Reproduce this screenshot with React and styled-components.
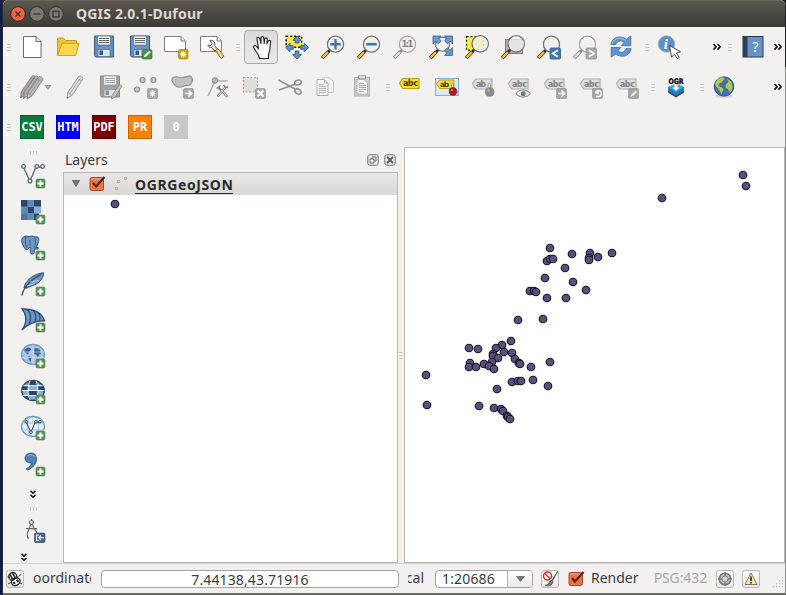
import React from 'react';
import styled, { createGlobalStyle } from 'styled-components';

const Global = createGlobalStyle`
  * { box-sizing: border-box; }
  body {
    margin: 0;
    overflow: hidden;
    font-family: "Noto Sans", "Open Sans", sans-serif;
    font-size: 14px;
    color: #3c3c3c;
  }
`;

const Desktop = styled.div`
  width: 786px;
  height: 595px;
  padding: 0 1px 2px 3px;
  background:
    linear-gradient(90deg, #101c44 0 2px, #2a2c33 2px 3px, transparent 3px),
    linear-gradient(#1f1e1c 0 67px, #8b8a87 67px 592px, #6b6b66 592px);
`;
const Window = styled.div`
  width: 782px;
  height: 593px;
  display: flex;
  flex-direction: column;
  border-radius: 5px 5px 0 0;
  background: #f2f1f0;
`;

const TitleBar = styled.header`
  height: 27px;
  flex: none;
  display: flex;
  align-items: center;
  gap: 3px;
  padding-left: 7px;
  border-top: 1px solid #68665a;
  border-radius: 5px 5px 0 0;
  background: linear-gradient(#59574e, #3d3b37);
`;
const TitleText = styled.h1`
  margin: 0 0 0 9px;
  font-size: 14px;
  line-height: 26px;
  font-weight: 700;
  letter-spacing: 0.2px;
  color: #dfdbd2;
`;
const WindowButton = styled.svg`
  width: 16px;
  height: 16px;
`;

const Toolbar = styled.div`
  height: 40px;
  flex: none;
  display: flex;
  align-items: center;
`;
const GripCell = styled.span`
  width: ${(p) => p.$w}px;
  padding-left: ${(p) => p.$pad}px;
  flex: none;
`;
const Grip = styled.i`
  display: block;
  width: 4px;
  height: 7px;
  background: repeating-linear-gradient(#c9c7c4 0 1px, #f7f6f5 1px 3px);
`;
const SideGrip = styled.i`
  display: block;
  width: 7px;
  height: 4px;
  background: repeating-linear-gradient(90deg, #c9c7c4 0 1px, #f7f6f5 1px 3px);
`;
const ToolButton = styled.button`
  width: 36px;
  height: 36px;
  flex: none;
  display: flex;
  align-items: center;
  justify-content: center;
  border: 0;
  padding: 0;
  background: none;
`;
const ActiveTool = styled(ToolButton)`
  width: 34px;
  height: 34px;
  margin: 0 1px;
  padding-left: 2px;
  border: 1px solid #aaa8a5;
  border-radius: 4px;
  background: linear-gradient(#dddbd9, #ebeae9);
`;
const Icon = styled.svg`
  width: 24px;
  height: 24px;
  flex: none;
  overflow: visible;
  font-family: "DejaVu Sans", sans-serif;
`;
const Spacer = styled.span`
  width: ${(p) => p.$w}px;
  flex: none;
`;
const FormatTile = styled.span`
  width: 24px;
  height: 24px;
  margin: 0 6px;
  flex: none;
  display: flex;
  align-items: center;
  justify-content: center;
  border: 1px solid rgba(0, 0, 0, ${(p) => (p.$flat ? 0 : 0.22)});
  background: ${(p) => p.$bg};
  color: #fff;
  font: 700 12px/22px "DejaVu Sans Mono", monospace;
`;

const Body = styled.main`
  height: 416px;
  flex: none;
  display: flex;
`;
const SideBar = styled.nav`
  width: 60px;
  flex: none;
  display: flex;
  flex-direction: column;
  align-items: center;
`;
const SideCell = styled.div`
  height: ${(p) => p.$h}px;
  width: 60px;
  padding-right: ${(p) => p.$shift || 0}px;
  flex: none;
  display: flex;
  align-items: center;
  justify-content: center;
`;
const Dock = styled.section`
  width: 335px;
  flex: none;
  display: flex;
  flex-direction: column;
`;
const DockTitle = styled.div`
  height: 25px;
  display: flex;
  align-items: center;
  padding: 0 2px;
  gap: 5px;
`;
const DockName = styled.span`
  flex: 1;
  font-size: 14px;
  letter-spacing: 0;
`;
const DockButton = styled.svg`
  width: 12px;
  height: 12px;
`;
const Tree = styled.div`
  flex: 1;
  border: 1px solid #bab8b4;
  background: #fff;
`;
const LayerRow = styled.div`
  height: 22px;
  display: flex;
  align-items: center;
  background: linear-gradient(#e9e8e6, #dad8d5);
`;
const TreeArrow = styled.svg`
  width: 8px;
  height: 7px;
  margin: 0 0 2px 8px;
`;
const LayerName = styled.span`
  height: 19px;
  margin-left: 8px;
  border-bottom: 1px solid #2a2a2a;
  font-size: 14px;
  line-height: 20px;
  font-weight: 700;
  letter-spacing: 0.6px;
  color: #2b2b2b;
`;
const SymbolRow = styled.div`
  height: 18px;
  padding: 4px 0 0 46px;
`;
const Symbol = styled.svg`
  display: block;
  width: 10px;
  height: 10px;
`;
const Splitter = styled.div`
  width: 6px;
  flex: none;
  display: flex;
  align-items: center;
  justify-content: center;
`;
const MapFrame = styled.section`
  width: 381px;
  height: 416px;
  border: 1px solid #bab8b4;
  background: #fff;
`;

const StatusBar = styled.footer`
  height: 30px;
  flex: none;
  display: flex;
  align-items: center;
  border-top: 1px solid #d5d3d0;
  padding-left: 3px;
`;
const Clip = styled.span`
  width: ${(p) => p.$w}px;
  height: 22px;
  margin-left: ${(p) => p.$ml}px;
  flex: none;
  display: flex;
  justify-content: ${(p) => p.$from || 'flex-start'};
  overflow: hidden;
  white-space: nowrap;
  line-height: 20px;
  letter-spacing: ${(p) => p.$track || 0};
  color: ${(p) => p.$color || '#3c3c3c'};
`;
const Field = styled.div`
  width: 298px;
  height: 18px;
  margin-left: 10px;
  flex: none;
  border: 1px solid #a5a29e;
  border-radius: 4px;
  background: #fff;
  text-align: center;
  line-height: 17px;
  letter-spacing: 0.12px;
`;
const Combo = styled.div`
  width: 98px;
  height: 18px;
  margin-left: 11px;
  flex: none;
  display: flex;
  overflow: hidden;
  border: 1px solid #a5a29e;
  border-radius: 4px;
  background: #fff;
`;
const ComboText = styled.span`
  width: 72px;
  padding-left: 6px;
  border-right: 1px solid #b5b2ae;
  line-height: 16px;
  letter-spacing: 0.15px;
`;
const ComboArrow = styled.span`
  flex: 1;
  display: flex;
  align-items: center;
  justify-content: center;
  background: linear-gradient(#fff, #ebeae8);
`;
const StatusButton = styled.span`
  width: 18px;
  height: 18px;
  margin-left: ${(p) => p.$ml}px;
  flex: none;
  display: flex;
  align-items: center;
  justify-content: center;
  border: 1px solid #b9b6b2;
  border-radius: 3px;
  background: linear-gradient(#fff, #e9e8e6);
`;
const SmallIcon = styled.svg`
  width: ${(p) => p.$w || 16}px;
  height: ${(p) => p.$h || 16}px;
  margin-left: ${(p) => p.$ml || 0}px;
  flex: none;
  overflow: visible;
`;

const BLUE = '#6d97c4';
const NAVY = '#2b4765';

const Badge = () => (
  <g>
    <rect x="15" y="15" width="9" height="9" rx="1.5" fill="#5a9155" stroke="#4c8048" strokeWidth=".6" />
    <path d="M19.5 16.5v6M16.5 19.5h6" stroke="#fff" strokeWidth="2" />
  </g>
);

const Lens = ({ cx = 14.5, cy = 9.2, r = 8, gray, children }) => (
  <g>
    <path d="M1.2 23l6.3-6.5" stroke={gray ? '#8d8d8d' : '#4a3a18'} strokeWidth="3.8" />
    <path d="M1.7 22.5l5.6-5.8" stroke={gray ? '#dcdcdc' : '#fdc02f'} strokeWidth="2.2" />
    <path d="M7 17l2.200-2.200" stroke={gray ? '#888' : '#2a2a2a'} strokeWidth="2.6" />
    <circle cx={cx} cy={cy} r={r} fill="#eeeeec" fillOpacity=".82" stroke={gray ? '#a2a2a2' : '#6c6c6c'} strokeWidth="1.3" />
    <circle cx={cx} cy={cy} r={r - 1.2} fill="none" stroke="#fff" strokeWidth=".8" opacity=".8" />
    {children}
  </g>
);

const Floppy = ({ gray }) => (
  <g>
    <path d="M2.5 1h19v21h-18l-1-1.5z" fill={gray ? '#a2a2a2' : '#6692c4'} stroke={gray ? '#858585' : '#34597f'} strokeWidth="1" />
    <path d="M5.5 1h13v9h-13z" fill="#f3f3f3" stroke={gray ? '#888' : '#3d5877'} strokeWidth=".6" />
    <path d="M7 3.5h10M7 5.5h10M7 7.5h10" stroke={gray ? '#9a9a9a' : '#555'} strokeWidth=".9" />
    <path d="M6 14.500h12v7H6z" fill="#dfe3e6" stroke={gray ? '#888' : '#3d5877'} strokeWidth=".6" />
    <path d="M7.500 15.500h3.500v4.500H7.500z" fill={gray ? '#8f8f8f' : '#2d598f'} />
  </g>
);

const GrayBadge = ({ children }) => (
  <g>
    <rect x="13.5" y="13.5" width="10" height="10" rx="1.3" fill="#a5a5a5" stroke="#8e8e8e" strokeWidth=".6" />
    {children}
  </g>
);

const Tag = ({ text = 'abc', yellow, children }) => (
  <Icon viewBox={yellow ? '1 .5 24 24' : '0 0 24 24'}>
    <path
      d="M1.500 8.700L4.700 4H21v10H4.700z"
      fill={yellow ? '#f5dc3e' : '#dfdfdf'}
      stroke={yellow ? '#c2a100' : '#b0b0b0'}
      strokeWidth="1.2"
      strokeLinejoin="round"
    />
    <text x="4.900" y="11.600" fontSize="8" fontWeight="700" textLength={text.length * 5} fill={yellow ? '#4b3d00' : '#7f7f7f'}>
      {text}
    </text>
    {children}
  </Icon>
);

const Chevrons = () => (
  <SmallIcon $w={8} $h={8} viewBox="0 0 8 8">
    <path d="M.5 1l2.6 2.8L.5 6.6M4.5 1l2.6 2.8-2.6 2.8" fill="none" stroke="#111" strokeWidth="1.6" />
  </SmallIcon>
);
const DownChevrons = () => (
  <SmallIcon $w={6} $h={8} viewBox="0 0 6 8">
    <path d="M.5.8L3 3.2 5.5.8M.5 4.8L3 7.2l2.5-2.4" fill="none" stroke="#111" strokeWidth="1.5" />
  </SmallIcon>
);

const pencil = (fill, line = '#999') => (
  <g>
    <path d="M4.200 17.500L15.200 1.500c1-1.300 4.800.9 4.200 2.500L8.700 20.200 3.500 23.500z" fill={fill} stroke={line} strokeWidth="1" strokeLinejoin="round" />
    <path d="M6.500 18.500L17 3M4.200 17.500l4.500 2.700M14 3.500l4.200 2.700" stroke={line} strokeWidth=".7" />
    <path d="M3.500 23.500l.3-2 1.500.8z" fill="#777" />
  </g>
);

const I = {
  page: (
    <Icon viewBox="0 0 24 24">
      <path d="M3.500 1.500h12.500l5 5v16h-17.500z" fill="#fff" stroke="#6c6c6c" />
      <path d="M16 1.500v5h5" fill="#e6e6e6" stroke="#6c6c6c" />
    </Icon>
  ),
  folder: (
    <Icon viewBox="0 0 24 24">
      <path d="M1.500 20V3.500l1-.5h5l2 2.500H20.500V9" fill="#e9c23c" stroke="#c79a1c" strokeLinejoin="round" />
      <path d="M1.500 20.500L6 8.500H23l-3.200 12z" fill="#fbd751" stroke="#d0a422" strokeLinejoin="round" />
    </Icon>
  ),
  save: <Icon viewBox="0 0 24 24"><Floppy /></Icon>,
  saveAs: (
    <Icon viewBox="0 0 24 24">
      <Floppy />
      <rect x="14" y="14.500" width="10" height="9.500" rx="1.500" fill="#4f8e51" stroke="#3e7640" strokeWidth=".7" />
      <path d="M16 22.200l.6-2.200 4.500-4.200 1.500 1.500-4.500 4.300z" fill="#fff" />
    </Icon>
  ),
  composer: (
    <Icon viewBox="0 0 24 24">
      <path d="M.5 1.500H17L21.500 6v10.500H.5z" fill="#fff" stroke="#808080" />
      <path d="M17 1.500V6h4.500" fill="#e6e6e6" stroke="#808080" />
      <rect x="14.500" y="14.500" width="9.500" height="9.500" rx="1.500" fill="#c79f10" stroke="#ad8800" strokeWidth=".7" />
      <path d="M19.200 16v6.500M16 19.200h6.500M17 17l4.500 4.500M21.500 17L17 21.500" stroke="#fff6cc" strokeWidth="1.200" />
    </Icon>
  ),
  manager: (
    <Icon viewBox="0 0 24 24">
      <path d="M.5 1.500H17L21.500 6v10.500H.5z" fill="#fff" stroke="#808080" />
      <path d="M17 1.500V6h4.500" fill="#e6e6e6" stroke="#808080" />
      <path d="M10 5.500c1.800-.6 4 .3 4.600 2 .4 1.100.3 2-.1 2.900l3.500 4.300-2.200 2.200-4-4.400c-1.800.3-3.600-.7-3.900-2.500l3 .5 1-2z" fill="#e4e4e4" stroke="#444" strokeWidth=".9" />
      <path d="M15.500 15.500l2.500-2 6 7.700-2.800 2.500z" fill="#edd57e" stroke="#73591b" strokeWidth=".9" />
    </Icon>
  ),
  hand: (
    <Icon viewBox="0 0 24 24">
      <path
        d="M8.200 19.500C6.500 17.500 5 15 3.700 12.500c-.7-1.600 1.600-2.600 2.900-1l2 2.400L7 4.200c-.4-2 2.100-2.600 2.700-.6L11 8.500V2.800c0-1.800 2.500-1.800 2.700 0l.5 5.700.6-4.500c.3-1.700 2.500-1.400 2.400.3L16.900 9l1.400-3c.8-1.300 2.700-.5 2.300 1l-.9 8.500c-.2 1.800-1 2.500-1.200 4v4H9.500z"
        fill="#fff" stroke="#222" strokeWidth="1.100" strokeLinejoin="round"
      />
    </Icon>
  ),
  panSel: (
    <Icon viewBox="0 0 24 24">
      <rect x="1.200" y="1.200" width="15.500" height="11" fill="#fbe73c" stroke="#111" strokeWidth="1.600" strokeDasharray="2 2" />
      <path
        d="M12 1l4 4.300h-2.200V8h-3.600V5.300H8zM12 24l-4.300-4.500h2.500V16h3.600v3.500h2.500zM.7 12.500L5 8.200v2.500h3.200v3.600H5v2.500zM23.500 12.500l-4.300-4.300v2.500h-3.500v3.600h3.500v2.500z"
        fill="#5f92c9" stroke="#2c5686" strokeWidth=".9"
      />
    </Icon>
  ),
  zoomIn: (
    <Icon viewBox="0 0 24 24"><Lens><path d="M14.500 4v10.500M9.200 9.200h10.600" stroke="#3f74ad" strokeWidth="2.400" /></Lens></Icon>
  ),
  zoomOut: (
    <Icon viewBox="0 0 24 24"><Lens><path d="M9.200 9.200h10.600" stroke="#3f74ad" strokeWidth="2.600" /></Lens></Icon>
  ),
  zoomOne: (
    <Icon viewBox="0 0 24 24">
      <Lens gray><text x="14.500" y="12.200" textAnchor="middle" fontSize="8.500" fontWeight="700" textLength="12" fill="#858585">1:1</text></Lens>
    </Icon>
  ),
  zoomFull: (
    <Icon viewBox="0 0 24 24">
      <Lens cx={13.500} r={7} />
      <path
        d="M4 1h8L9.600 3.300 12 5.800 9 8.800 6.400 6.200 4 9zM23.500 1h-8l2.400 2.300-2.400 2.500 3 3 2.600-2.600L23.500 9zM23.500 20.500h-8l2.400-2.300-2.400-2.500 3-3 2.600 2.600 2.400-2.800z"
        fill="#6a98c9" stroke="#365f8c" strokeWidth=".8"
      />
    </Icon>
  ),
  zoomSel: (
    <Icon viewBox="0 0 24 24">
      <rect x="1.500" y="1.700" width="17" height="13.500" fill="#ffea3c" stroke="#222" strokeWidth="1.300" strokeDasharray="2 2" />
      <Lens cx={15.200} cy={8.800} r={8.200} />
    </Icon>
  ),
  zoomLayer: (
    <Icon viewBox="0 0 24 24">
      <rect x="4.500" y="4.500" width="17" height="14" fill="#b9aebd" stroke="#81718a" />
      <Lens cx={15.200} cy={8.800} r={8.200} />
    </Icon>
  ),
  zoomLast: (
    <Icon viewBox="0 0 24 24">
      <Lens />
      <rect x="13" y="13" width="10.500" height="11" rx="1" fill="#4478ae" stroke="#2e5f92" strokeWidth=".8" />
      <path d="M21 15.200l-5.300 3.300 5.300 3.300" fill="none" stroke="#fff" strokeWidth="1.700" />
    </Icon>
  ),
  zoomNext: (
    <Icon viewBox="0 0 24 24">
      <Lens gray />
      <rect x="13" y="13" width="10.500" height="11" rx="1" fill="#a9a9a9" stroke="#929292" strokeWidth=".8" />
      <path d="M15.800 15.200l5.300 3.300-5.300 3.300" fill="none" stroke="#fff" strokeWidth="1.700" />
    </Icon>
  ),
  refresh: (
    <Icon viewBox="0 0 24 24">
      <g fill="#5c95d2" stroke="#386fae" strokeWidth=".8" strokeLinejoin="round">
        <path d="M1.800 9.500C3.500 1.200 12 .2 17.300 4.200L21.800 1v9.700h-9.600l3-3.500C11.500 4.800 7.800 6 6.800 9.700z" />
        <path d="M22.200 13.700c-1.700 8.300-10.200 9.300-15.500 5.300l-4.500 3.200v-9.700h9.600l-3 3.500c3.700 2.400 7.400 1.200 8.400-2.500z" />
      </g>
      <path d="M3 8.500C5 2.500 12 2 17 5.500" fill="none" stroke="#a7c9ea" strokeWidth=".9" />
    </Icon>
  ),
  identify: (
    <Icon viewBox="0 0 24 24">
      <circle cx="9.500" cy="9" r="8.300" fill="#5f8fc4" stroke="#9fb9d6" strokeWidth=".8" />
      <text x="6.800" y="14" fontSize="15" fontStyle="italic" fontWeight="700" fill="#fff" fontFamily="Liberation Serif">i</text>
      <path d="M12.500 10.500l11 6.300-4.200 1.200 3 4.300-1.800 1.300-3.200-4.400-2.800 3z" fill="#fff" stroke="#333" strokeWidth=".9" />
    </Icon>
  ),
  help: (
    <Icon viewBox="0 0 24 24">
      <rect x="2" y="1.500" width="20" height="20.500" fill="#6894c5" stroke="#26394c" />
      <rect x="2" y="1.500" width="4.500" height="20.500" fill="#2d4053" />
      <text x="14.500" y="16.500" fontSize="14" textAnchor="middle" fill="#fff" fontFamily="Noto Sans">?</text>
    </Icon>
  ),
  pencils: (
    <Icon viewBox="0 0 24 24">
      <g transform="translate(-3 -.5)">{pencil('#aaa', '#868686')}</g>
      <g transform="translate(0 0)">{pencil('#b4b4b4', '#868686')}</g>
      <g transform="translate(3.500 .5)">{pencil('#bcbcbc', '#868686')}</g>
    </Icon>
  ),
  pencil: <Icon viewBox="-1.500 0 24 24">{pencil('#dedede')}</Icon>,
  saveEdit: (
    <Icon viewBox="0 0 24 24">
      <Floppy gray />
      <path d="M14 20.500l7.500-11 2.500 1.500-7.500 11.500-3 1.500z" fill="#c5c5c5" stroke="#858585" strokeWidth=".8" />
    </Icon>
  ),
  addPoint: (
    <Icon viewBox="0 0 24 24">
      <g fill="#c4c4c4" stroke="#8f8f8f" strokeWidth="1.100">
        <circle cx="8.500" cy="5" r="2.500" /><circle cx="19.500" cy="5" r="2.500" /><circle cx="3" cy="14.500" r="2.500" />
      </g>
      <GrayBadge><path d="M18.500 15v7M15 18.500h7M16 16l5 5M21 16l-5 5" stroke="#fff" strokeWidth="1.100" /></GrayBadge>
    </Icon>
  ),
  moveFeature: (
    <Icon viewBox="0 0 24 24">
      <path d="M3 2.500c3-2 6 .2 9 .2s7-3.200 9.500-.7c2.500 3-.5 9-3.500 8.500-4-.7-5 2-8.500 1.800C5.500 12-.5 5.500 3 2.500z" fill="#c2c2c2" stroke="#929292" strokeWidth="1.100" />
      <GrayBadge><path d="M15 18.500h6M18.500 15.500l3 3-3 3" fill="none" stroke="#fff" strokeWidth="1.700" /></GrayBadge>
    </Icon>
  ),
  node: (
    <Icon viewBox="0 0 24 24">
      <path d="M2 21L9 6l12.500-.2" fill="none" stroke="#9b9b9b" strokeWidth="1.200" />
      <circle cx="9" cy="5.500" r="2.700" fill="#b9b9b9" stroke="#858585" />
      <path d="M11.500 21.500l8-9M12.500 12.500l9 9.500" stroke="#838383" strokeWidth="2.400" />
      <path d="M12 21l7-8M15 15l6 6.500" stroke="#ddd" strokeWidth="1" />
      <path d="M10.500 13.500l4-3M17.500 10l2.500 2.500 2-.5" fill="none" stroke="#838383" strokeWidth="1.400" />
    </Icon>
  ),
  deleteSel: (
    <Icon viewBox="0 0 24 24">
      <rect x="1.500" y="2.500" width="14" height="14.500" fill="#dedede" stroke="#a5a5a5" strokeWidth="1.200" strokeDasharray="2 1.500" />
      <GrayBadge><path d="M15.500 15.500l6 6M21.500 15.500l-6 6" stroke="#fff" strokeWidth="2" /></GrayBadge>
    </Icon>
  ),
  cut: (
    <Icon viewBox="0 0 24 24">
      <path d="M.5 5l16.500 9M1 15l17-6" stroke="#929292" strokeWidth="1.800" />
      <ellipse cx="20" cy="7.500" rx="3.300" ry="2.300" fill="none" stroke="#8f8f8f" strokeWidth="1.600" transform="rotate(-20 20 7.500)" />
      <ellipse cx="20" cy="16.500" rx="3.300" ry="2.300" fill="none" stroke="#8f8f8f" strokeWidth="1.600" transform="rotate(35 20 16.500)" />
    </Icon>
  ),
  copy: (
    <Icon viewBox="0 0 24 24">
      <path d="M8.500 2.500h7l4 4v11h-11z" fill="#f2f2f2" stroke="#c9c9c9" />
      <path d="M3 4.500h7.500l3.500 3.500v12.500H3z" fill="#f6f6f6" stroke="#adadad" />
      <path d="M5 9.500h5M5 11.500h7M5 13.500h7M5 15.500h7M5 17.500h7" stroke="#b5b5b5" />
      <path d="M10.500 4.500v3.500H14" fill="none" stroke="#adadad" />
    </Icon>
  ),
  paste: (
    <Icon viewBox="0 0 24 24">
      <rect x="4.500" y="2.500" width="15" height="18.500" fill="#cfcfcf" stroke="#b0b0b0" />
      <path d="M7 4.500h7l3.500 3.500v11H7z" fill="#f5f5f5" stroke="#aaa" strokeWidth=".8" />
      <rect x="8.500" y=".8" width="7" height="3" fill="#e9e9e9" stroke="#9b9b9b" />
      <path d="M9 8.500h5M9 10.500h7M9 12.500h7M9 14.500h7M9 16.500h5" stroke="#a2a2a2" strokeWidth=".9" />
    </Icon>
  ),
  ogr: (
    <Icon viewBox="0 0 24 24">
      <path d="M4 13.500l8-3 8 3v4l-8 5-8-5z" fill="#30424d" />
      <path d="M4 12l8-3 8 3v3.500l-8 5.500-8-5.500z" fill="#2080bd" />
      <path d="M4 12l8-3 8 3-8 5z" fill="#35a3e0" />
      <path d="M10.500 9h3v3.500h2.200L12 16l-3.700-3.500h2.200z" fill="#fff" />
      <text x="4.500" y="9" fontSize="7.500" fontWeight="700" textLength="15" lengthAdjust="spacingAndGlyphs" fill="#111" stroke="#111" strokeWidth=".4">OGR</text>
    </Icon>
  ),
  globe: (
    <Icon viewBox="0 0 24 24">
      <ellipse cx="12" cy="21" rx="9" ry="2" fill="#d5d4d2" />
      <circle cx="12" cy="11.500" r="9.700" fill="#3d70b4" stroke="#28518d" />
      <path d="M5 5c2.500-3 6-3.500 8-2l-2 2.500-1.500 2.500L7.500 8 6.500 11l3.500 1.500 1.500 2-2 4.500-2.500-4-3.500-4.500C3 8.400 3.500 7 5 5zM15 4l4 2.500 1.700 5-1.200 4.500-2 1-1.500-3-2.500-1.500.5-3.500 2.500-1.500z" fill="#b4c940" />
    </Icon>
  ),
};

const Vec = ({ s = '#48698a' }) => (
  <g fill="#fff" stroke={s} strokeWidth="1.300">
    <path d="M2.500 3.500L9 17l6-14h6" fill="none" />
    <circle cx="2.500" cy="2.500" r="1.800" /><circle cx="9" cy="17" r="1.900" /><circle cx="15.800" cy="2.500" r="1.800" /><circle cx="21.500" cy="2.500" r="1.800" />
  </g>
);

const sideIcons = [
  <g><Vec /></g>,
  <g>
    <path d="M6.700 0H13v6.700H6.700zM0 6.700h6.700v6.600H0zM6.700 13.300H13V20H6.700z" fill="#5f8abd" />
    <path d="M0 0h6.700v6.700H0zM13 0h7v6.700h-7zM6.700 6.700H13v6.600H6.700zM0 13.300h6.700V20H0zM13 13.300h5V20h-5z" fill={NAVY} />
    <path d="M13 6.700h7v6.600h-7zM0 13.300h6.700V20H0z" fill="#86b0df" />
    <path d="M0 13.300h6.700V20H0z" fill="#4c78a8" />
  </g>,
  <g fill={BLUE} stroke="#2d5075" strokeWidth="1">
    <path d="M2.500 1c2-1.500 4-.8 5.500-.3 2-.9 4.500-.8 6 .3 3-.9 4.500 1 3.500 4.500-.5 2.500-1.500 4.500-2.500 6h2V13h-3.700v3.500c0 2-3.800 2-4 0V11c-2 1.500-3 3.500-4.500 2.500C2 11-1.500 3 2.500 1z" />
    <path d="M5 1c-1 4-.5 8 1 11M9 4v6M13.500 1.500c1.500 3 1 6.500 0 10" fill="none" strokeWidth=".8" />
  </g>,
  <g>
    <path d="M3 16C4 9 12 2 22.500.7c.5 4-2.500 9-8.500 12-3 1.500-6 1.700-8 3.300z" fill={BLUE} stroke={NAVY} strokeWidth="1" />
    <path d="M.8 23.500C3 14 10 7.500 20 2.500" fill="none" stroke={NAVY} strokeWidth="1.200" />
    <path d="M6 14l8-2.500M9 10l9-1.500" stroke="#b7d0ea" strokeWidth="1" />
  </g>,
  <g fill={BLUE} stroke={NAVY} strokeWidth="1.200">
    <path d="M1 .8c9 0 19.500 2 22.500 12C15 12.500 8 15 .8 22 6 15.500 6 7 1 .8z" />
    <path d="M6.500 1.500c3.500 4 4 9 1.500 14M12 2c3 4 3.500 8 2 11M17 4.500c2 2.500 2.500 5.500 1.500 8" fill="none" />
  </g>,
  <g>
    <ellipse cx="12" cy="10.500" rx="11.500" ry="10" fill="#a9c5e5" stroke={BLUE} strokeWidth="1.300" />
    <path d="M3 6l4-2.500 3.500 1.500-2.500 3-1 2.500-3-2zM7.500 12l3 1.500-1 4.500-2-2.500zM13.500 4l3.500.5 2 1.500 1 4-2 .5-1 3-2-3-2-1z" fill="#3c638e" />
    <path d="M1 8h22M1 13.500h22M12 .5v20" stroke="#d1e0f1" strokeWidth=".7" />
  </g>,
  <g>
    <ellipse cx="12" cy="10.500" rx="11.300" ry="10" fill={NAVY} stroke={NAVY} strokeWidth="1.300" />
    <path d="M2.500 5.700L7 2.200 6.500 5.700zM17 5.700l-.5-3.500 5 3.500zM7 5.700h10V10H7zM1.500 10.500h5.500v5H2.500zM17 10.500h5.500l-1 5H17zM8 15.500h8l-1.500 4h-5z" fill="#86b0df" />
    <path d="M2.500 5.700h19M.8 10.500h22.400M2.500 15.500h19" stroke="#fff" strokeWidth="1" />
    <path d="M9 .8C6.500 6 6.500 14 9 20M15 .8c2.500 5.500 2.500 13.500 0 19" fill="none" stroke="#fff" strokeWidth="1" />
  </g>,
  <g>
    <ellipse cx="12" cy="10.500" rx="11.500" ry="10" fill="#e3edf7" stroke={BLUE} strokeWidth="1.300" />
    <path d="M1 7h22M1 14h22M9 .8c-3 5.500-3 14 0 19M15 .8c3 5.500 3 14 0 19" fill="none" stroke="#9dbfe3" strokeWidth="1" />
    <g transform="translate(3.500 4) scale(.72)"><Vec s="#1f2f3e" /></g>
  </g>,
  <g>
    <path d="M8 1.500c5-2 9 3 7 8.500-1.300 4-5 7-9 8l-.5-1.500c2.500-1 5-3.500 5-5.500C6.500 11 4 9 4 6c0-2 1.500-4 4-4.500z" fill="#527fb4" stroke="#34597f" strokeWidth=".9" />
    <path d="M7 4c2-2 5-1.500 6 .5" fill="none" stroke="#a8c5e5" strokeWidth="1" />
  </g>,
];

const Check = ({ ml }) => (
  <SmallIcon $ml={ml} viewBox="0 0 16 16">
    <rect x="1" y="1.500" width="13.500" height="13" rx="2" fill="#ef7444" stroke="#a9492a" />
    <path d="M2.500 3h10.500" stroke="#ffa680" />
    <path d="M4 7l3 3.500L15.500 1" fill="none" stroke="#4a2c22" strokeWidth="2.200" />
  </SmallIcon>
);

const points = [
  [743, 175], [746, 186], [662, 198], [550, 248], [572, 254], [590, 253], [612, 253], [598, 257], [589, 258],
  [589, 260], [547, 261], [550, 259], [553, 259], [565, 268], [545, 278], [573, 282], [586, 290], [530, 291],
  [534, 291], [536, 292], [547, 298], [566, 298], [518, 320], [543, 319], [469, 348], [478, 349], [511, 341],
  [502, 345], [496, 348], [504, 352], [512, 353], [493, 354], [493, 356], [498, 358], [492, 362], [515, 359],
  [519, 363], [520, 364], [470, 363], [469, 367], [476, 367], [484, 364], [489, 366], [494, 369], [531, 367],
  [550, 362], [512, 382], [518, 381], [521, 381], [533, 380], [548, 386], [497, 389], [479, 406], [494, 408],
  [501, 409], [503, 411], [507, 416], [508, 417], [510, 419], [426, 375], [427, 405],
];

const T = ({ icon }) => <ToolButton>{I[icon]}</ToolButton>;
const G = ({ w = 12, pad = 5 }) => <GripCell $w={w} $pad={pad}><Grip /></GripCell>;

export default function App() {
  return (
    <Desktop>
      <Global />
      <Window>
        <TitleBar>
          <WindowButton viewBox="0 0 16 16">
            <circle cx="8" cy="8" r="7.300" fill="#ee6440" stroke="#2f2c28" />
            <path d="M5.500 5.500l5 5M10.500 5.500l-5 5" stroke="#47261b" strokeWidth="1.300" />
          </WindowButton>
          <WindowButton viewBox="0 0 16 16">
            <circle cx="8" cy="8" r="7.300" fill="#7b7971" stroke="#34322e" />
            <path d="M4.500 8h7" stroke="#34322e" strokeWidth="1.300" />
          </WindowButton>
          <WindowButton viewBox="0 0 16 16">
            <circle cx="8" cy="8" r="7.300" fill="#7b7971" stroke="#34322e" />
            <rect x="5" y="5.200" width="6" height="5.600" fill="none" stroke="#34322e" strokeWidth="1.200" />
          </WindowButton>
          <TitleText>QGIS 2.0.1-Dufour</TitleText>
        </TitleBar>

        <Toolbar>
          <G w={11} pad={4} />
          {['page', 'folder', 'save', 'saveAs', 'composer', 'manager'].map((n) => <T key={n} icon={n} />)}
          <G w={13} pad={6} />
          <ActiveTool>{I.hand}</ActiveTool>
          {['panSel', 'zoomIn', 'zoomOut', 'zoomOne', 'zoomFull', 'zoomSel', 'zoomLayer', 'zoomLast', 'zoomNext', 'refresh'].map((n) => (
            <T key={n} icon={n} />
          ))}
          <G w={12} pad={6} />
          <T icon="identify" />
          <Spacer $w={26} />
          <Chevrons />
          <G w={14} pad={7} />
          <T icon="help" />
          <Spacer $w={3} />
          <Chevrons />
        </Toolbar>

        <Toolbar>
          <G w={11} pad={4} />
          <ToolButton>{I.pencils}</ToolButton>
          <SmallIcon $w={6} $h={5} $ml={-5} viewBox="0 0 6 5"><path d="M0 .5h6L3 4.500z" fill="#aaa" stroke="#8c8c8c" strokeWidth=".7" /></SmallIcon>
          <Spacer $w={5} />
          {['pencil', 'saveEdit', 'addPoint', 'moveFeature', 'node', 'deleteSel', 'cut', 'copy', 'paste'].map((n) => <T key={n} icon={n} />)}
          <G w={13} pad={6} />
          <ToolButton><Tag yellow /></ToolButton>
          <ToolButton>
            <Icon viewBox="0 0 24 24">
              <rect x=".5" y="3.500" width="23" height="17" fill="#dce8f7" stroke="#82ade4" />
              <path d="M1.500 8.700L4.700 5H19v8.500H4.700z" fill="#f5dc3e" stroke="#c2a100" />
              <text x="5" y="11.800" fontSize="7.500" fontWeight="700" textLength="9" fill="#4b3d00">ab</text>
              <path d="M16.500 15V9.500c0-1.500 2-1.500 2 0V15" fill="#ddd" stroke="#888" strokeWidth=".8" />
              <circle cx="18" cy="16.500" r="3.900" fill="#b01c1c" stroke="#7f1515" strokeWidth=".6" />
              <circle cx="17" cy="15.300" r="1" fill="#e58b8b" />
            </Icon>
          </ToolButton>
          <ToolButton>
            <Tag text="ab">
              <path d="M17 16V9.500c0-1.500 2.500-1.500 2.500 0V16" fill="#e6e6e6" stroke="#999" strokeWidth=".9" />
              <circle cx="18.700" cy="17" r="4.800" fill="#8b8b8b" />
              <circle cx="17.500" cy="15.500" r="1.200" fill="#b5b5b5" />
            </Tag>
          </ToolButton>
          <ToolButton>
            <Tag>
              <path d="M9 18.700c3-5 11-5 14.500 0-4 4.500-11 4.500-14.500 0z" fill="#eee" stroke="#929292" strokeWidth="1.100" />
              <circle cx="16.200" cy="18.700" r="2.500" fill="#777" />
            </Tag>
          </ToolButton>
          <ToolButton><Tag><GrayBadge><path d="M15 18.500h6M18.500 15.500l3 3-3 3" fill="none" stroke="#fff" strokeWidth="1.600" /></GrayBadge></Tag></ToolButton>
          <ToolButton><Tag><GrayBadge><path d="M17 21.500h2.500a3 3 0 1 0-3-4l2.500 1V16" fill="none" stroke="#fff" strokeWidth="1.400" /></GrayBadge></Tag></ToolButton>
          <ToolButton><Tag><GrayBadge><path d="M15.500 22l1-2.500 4-4 1.500 1.500-4 4z" fill="#eee" /></GrayBadge></Tag></ToolButton>
          <G w={13} pad={6} />
          <T icon="ogr" />
          <G w={12} pad={6} />
          <T icon="globe" />
          <Spacer $w={32} />
          <Chevrons />
        </Toolbar>

        <Toolbar>
          <G w={11} pad={4} />
          <FormatTile $bg="#077b3d">CSV</FormatTile>
          <FormatTile $bg="#0000ff">HTM</FormatTile>
          <FormatTile $bg="#7d0000">PDF</FormatTile>
          <FormatTile $bg="#ff7f00">PR</FormatTile>
          <FormatTile $bg="#c7c7c7" $flat>0</FormatTile>
        </Toolbar>

        <Body>
          <SideBar>
            <SideCell $h={11}><SideGrip /></SideCell>
            {sideIcons.map((shape, i) => (
              <SideCell key={i} $h={36}><Icon viewBox="0 0 24 24">{shape}<Badge /></Icon></SideCell>
            ))}
            <SideCell $h={24}><DownChevrons /></SideCell>
            <SideCell $h={5}><SideGrip /></SideCell>
            <SideCell $h={40}>
              <Icon viewBox="0 0 24 24">
                <g fill="none" stroke="#666" strokeWidth="1.200">
                  <circle cx="10.500" cy="3.500" r="2" />
                  <path d="M10.500 0v1.500M9.500 5.500C8.500 12 4 14 7.500 20M11.500 5.500c1 5 4 6 4.500 9M5 9.700h11" />
                </g>
                <rect x="13.500" y="14" width="10.500" height="9.500" rx="1.500" fill="#436987" stroke="#2b4b66" strokeWidth=".7" />
                <path d="M18 16h-2.500v5.500H18M23 18.700h-5M20 16.500l-2.300 2.200L20 21" fill="none" stroke="#fff" strokeWidth="1.100" />
              </Icon>
            </SideCell>
            <SideCell $h={11} $shift={19}><DownChevrons /></SideCell>
          </SideBar>

          <Dock>
            <DockTitle>
              <DockName>Layers</DockName>
              <DockButton viewBox="0 0 12 12">
                <g fill="none" stroke="#6d6a66"><rect x=".8" y=".8" width="10.400" height="10.400" rx="2" /><path d="M5 5V3h4v4H7M3 5h4v4H3z" /></g>
              </DockButton>
              <DockButton viewBox="0 0 12 12">
                <rect x=".8" y=".8" width="10.400" height="10.400" rx="2" fill="none" stroke="#6d6a66" />
                <path d="M3 3l6 6M9 3L3 9" stroke="#5d5a57" strokeWidth="2" />
              </DockButton>
            </DockTitle>
            <Tree>
              <LayerRow>
                <TreeArrow viewBox="0 0 8 7"><path d="M.5.500h7L4 6.500z" fill="#777" stroke="#4c4c4c" strokeWidth=".7" /></TreeArrow>
                <Check ml={9} />
                <SmallIcon $w={12} $h={14} $ml={10} viewBox="0 0 12 14">
                  <g fill="#f4e1d9" stroke="#bf7d68" strokeWidth=".8"><circle cx="1.500" cy="11.500" r="1.200" /><circle cx="3.500" cy="4.500" r="1.200" /><circle cx="10.500" cy="1.500" r="1.200" /></g>
                </SmallIcon>
                <LayerName>OGRGeoJSON</LayerName>
              </LayerRow>
              <SymbolRow>
                <Symbol viewBox="0 0 10 10"><circle cx="5" cy="5" r="3.800" fill="#5b4e80" stroke="#15121c" strokeWidth="1.100" /></Symbol>
              </SymbolRow>
            </Tree>
          </Dock>
          <Splitter><Grip /></Splitter>
          <MapFrame>
            <svg width="379" height="414" viewBox="405 148 379 414">
              {points.map(([x, y], i) => (
                <circle key={i} cx={x} cy={y} r="3.800" fill="#5b4e80" stroke="#15121c" strokeWidth="1.100" />
              ))}
            </svg>
          </MapFrame>
        </Body>

        <StatusBar>
          <StatusButton $ml={0}>
            <SmallIcon viewBox="0 0 16 16">
              <g transform="rotate(-30 7.500 8.500)">
                <ellipse cx="7.500" cy="5" rx="4" ry="4" fill="#fff" stroke="#222" strokeWidth="1.300" />
                <ellipse cx="7.500" cy="11" rx="4.500" ry="3.700" fill="#fff" stroke="#222" strokeWidth="1.300" />
                <path d="M6 1.500v6M9 1.500v6M4 8h7.500" stroke="#222" strokeWidth="1.600" />
                <path d="M5.500 10v2.500M9.500 10v2.500" stroke="#222" strokeWidth="2" />
              </g>
              <path d="M.5 6l2.500.5M14.500 3l-3 2.500M1 13l2.500-1.500M15 13l-2.500-1.500" stroke="#222" />
            </SmallIcon>
          </StatusButton>
          <Clip $w={57} $ml={10} $from="center">Coordinate:</Clip>
          <Field>7.44138,43.71916</Field>
          <Clip $w={16} $ml={9} $from="flex-end">Scal</Clip>
          <Combo>
            <ComboText>1:20686</ComboText>
            <ComboArrow><SmallIcon $w={9} $h={6} viewBox="0 0 9 6"><path d="M.5.500h8l-4 5z" fill="#777" stroke="#555" strokeWidth=".6" /></SmallIcon></ComboArrow>
          </Combo>
          <StatusButton $ml={8}>
            <SmallIcon viewBox="0 0 16 16">
              <path d="M15.500.5L10 9l-2 1c-1 2-2 4-5 4.500 4 1 7 0 8-3.500l-.5-1z" fill="#777" stroke="#555" strokeWidth=".8" />
              <circle cx="5.500" cy="5" r="4" fill="#fff" stroke="#d8292f" strokeWidth="1.500" />
              <path d="M2.800 2.500L8.200 7.800" stroke="#d8292f" strokeWidth="1.400" />
            </SmallIcon>
          </StatusButton>
          <Check ml={9} />
          <Clip $w={50} $ml={7}>Render</Clip>
          <Clip $w={53} $ml={13} $from="center" $color="#a8a6a3" $track="-0.1px">EPSG:4326</Clip>
          <StatusButton $ml={9}>
            <SmallIcon viewBox="0 0 16 16">
              <circle cx="8" cy="8" r="5.800" fill="#c4c4c4" stroke="#777" strokeWidth="1.500" />
              <path d="M8 1v14M1 8h14" stroke="#777" strokeWidth="1.500" />
              <circle cx="8" cy="8" r="3" fill="#ddd" stroke="#888" />
            </SmallIcon>
          </StatusButton>
          <StatusButton $ml={8}>
            <SmallIcon viewBox="0 0 16 16">
              <path d="M8 2l6 11.500H2z" fill="#f6f2a5" stroke="#777" strokeLinejoin="round" />
              <path d="M8 5.500v4.500M8 11v1.500" stroke="#222" strokeWidth="1.600" />
            </SmallIcon>
          </StatusButton>
          <Spacer $w={13} />
          <SmallIcon $w={11} $h={12} viewBox="0 -3 11 12">
            <path d="M9.500 1v11M6.500 4v8M3.500 7v5M.5 10v2" stroke="#c4c2bf" strokeWidth="1.200" strokeDasharray="1.200 1.800" />
          </SmallIcon>
        </StatusBar>
      </Window>
    </Desktop>
  );
}
